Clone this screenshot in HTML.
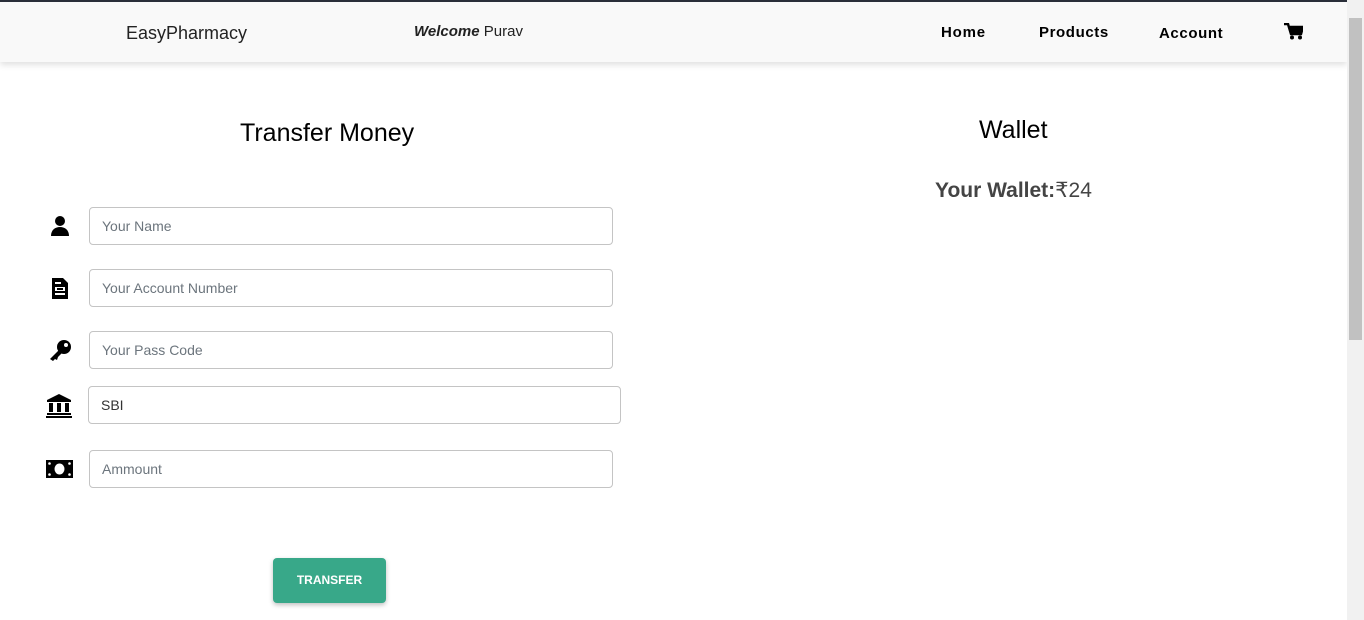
<!DOCTYPE html>
<html><head><meta charset="utf-8"><style>
*{box-sizing:border-box;margin:0;padding:0}
body{width:1364px;height:620px;overflow:hidden;background:#fff;font-family:"Liberation Sans",sans-serif;position:relative}
.top{position:absolute;left:0;top:0;width:1364px;height:2px;background:#2b2f3a}
.nav{position:absolute;left:0;top:2px;width:1347px;height:60px;background:#f9f9f9;box-shadow:0 3px 6px rgba(0,0,0,.12)}
.t{position:absolute;white-space:nowrap}
.sb{position:absolute;right:0;top:0;width:17px;height:620px;background:#f1f1f1}
.thumb{position:absolute;right:2px;top:18px;width:13px;height:322px;background:#c1c1c1}
.inp{position:absolute;height:38px;border:1px solid #c4c4c4;border-radius:4px;font-size:14px;color:#6c757d;padding:10px 12px;line-height:16px}
.ic{position:absolute}
</style></head><body>
<div class="top"></div>
<div class="nav">
<div class="t" style="left:126px;top:21px;font-size:18px;color:#222">EasyPharmacy</div>
<div class="t" style="left:414px;top:21px;font-size:15px;color:#222"><b><i>Welcome</i></b> Purav</div>
<div class="t" style="left:941px;top:22px;font-size:15px;font-weight:bold;letter-spacing:0.8px">Home</div>
<div class="t" style="left:1039px;top:22px;font-size:15px;font-weight:bold;letter-spacing:0.6px">Products</div>
<div class="t" style="left:1159px;top:23px;font-size:15px;font-weight:bold;letter-spacing:0.6px">Account</div>
<svg class="ic" style="left:1284px;top:21px" width="19" height="17" viewBox="0 0 19 17"><path d="M0 1h4l3 10h10l2-7H6" fill="none" stroke="#000" stroke-width="2.5"/><rect x="6" y="4" width="12" height="6" fill="#000"/><circle cx="8" cy="14.5" r="2" fill="#000"/><circle cx="16" cy="14.5" r="2" fill="#000"/></svg>
</div>
<div class="t" style="left:240px;top:119px;font-size:25px;color:#000">Transfer Money</div>
<div class="t" style="left:979px;top:116px;font-size:25px;color:#000">Wallet</div>
<div class="t" style="left:935px;top:178px;font-size:21px;color:#444"><b>Your Wallet:</b>₹24</div>

<svg class="ic" style="left:50px;top:215px" width="20" height="22" viewBox="0 0 20 22"><circle cx="10" cy="6" r="5"/><path d="M1 21c0-6 4-9 9-9s9 3 9 9z"/></svg>
<svg class="ic" style="left:52px;top:278px" width="16" height="21" viewBox="0 0 16 21"><path d="M0 0h11l5 5v16H0z"/><rect x="3" y="4" width="6" height="2" fill="#fff"/><rect x="3" y="9" width="10" height="4" fill="#fff"/><rect x="5" y="10" width="6" height="2"/><rect x="3" y="15" width="10" height="2" fill="#fff"/></svg>
<svg class="ic" style="left:48px;top:339px" width="24" height="22" viewBox="0 0 24 22"><circle cx="16" cy="8" r="7"/><path d="M11 11L2 20l3 2 2-2 2 1 1-3 4-4z"/><circle cx="18" cy="6" r="2" fill="#fff"/></svg>
<svg class="ic" style="left:46px;top:394px" width="26" height="24" viewBox="0 0 26 24"><path d="M13 0L1 6v2h24V6z"/><rect x="3" y="9" width="4" height="9"/><rect x="11" y="9" width="4" height="9"/><rect x="19" y="9" width="4" height="9"/><rect x="1" y="19" width="24" height="2"/><rect x="0" y="22" width="26" height="2"/></svg>
<svg class="ic" style="left:46px;top:460px" width="27" height="18" viewBox="0 0 27 18"><rect width="27" height="18"/><ellipse cx="13.5" cy="9" rx="5" ry="5.5" fill="#fff"/><circle cx="3.5" cy="3.5" r="1.3" fill="#fff"/><circle cx="23.5" cy="3.5" r="1.3" fill="#fff"/><circle cx="3.5" cy="14.5" r="1.3" fill="#fff"/><circle cx="23.5" cy="14.5" r="1.3" fill="#fff"/></svg>

<div class="inp" style="left:89px;top:207px;width:524px">Your Name</div>
<div class="inp" style="left:89px;top:269px;width:524px">Your Account Number</div>
<div class="inp" style="left:89px;top:331px;width:524px">Your Pass Code</div>
<div class="inp" style="left:88px;top:386px;width:533px;color:#333">SBI</div>
<div class="inp" style="left:89px;top:450px;width:524px">Ammount</div>

<div style="position:absolute;left:273px;top:558px;width:113px;height:45px;background:#38a889;border-radius:4px;box-shadow:0 2px 5px rgba(0,0,0,.25);color:#fff;font-size:12px;font-weight:bold;text-align:center;line-height:45px">TRANSFER</div>

<div class="sb"><div class="thumb"></div></div>
</body></html>
